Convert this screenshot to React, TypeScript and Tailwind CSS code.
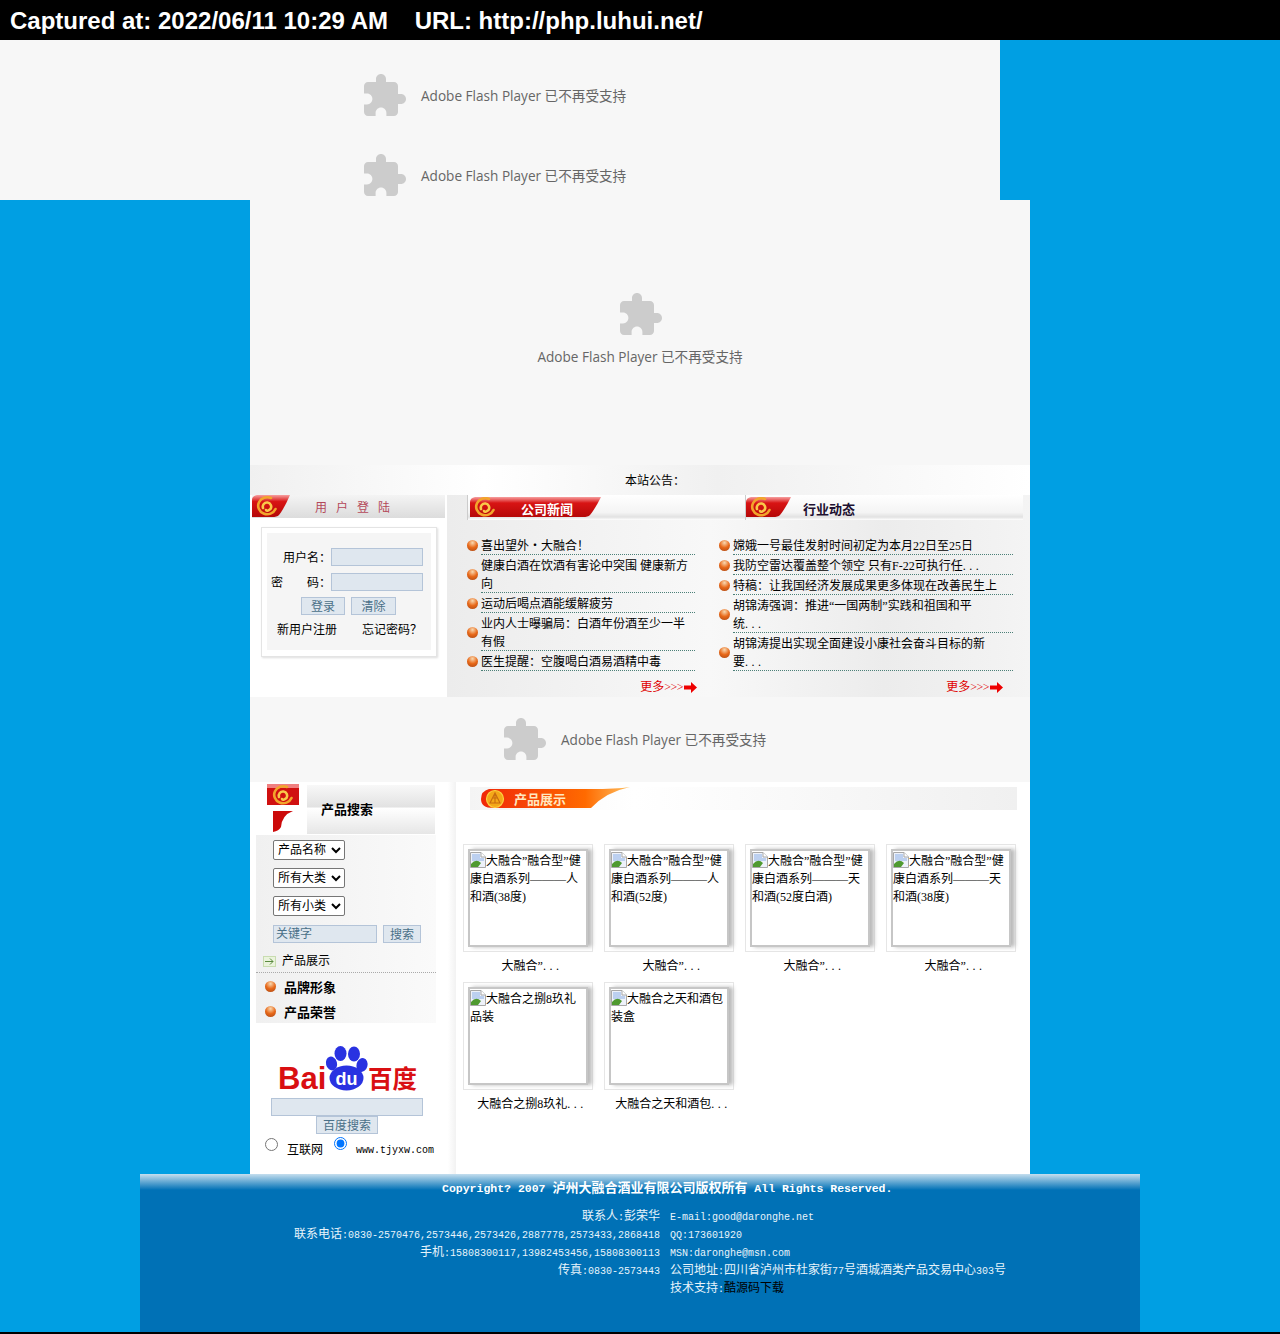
const cjk = "font-['Liberation_Serif','Noto_Sans_CJK_SC',serif]";
const mono = "font-['Liberation_Mono','Noto_Sans_CJK_SC',monospace]";

const leftNews = [
  ["喜出望外・大融合！"],
  ["健康白酒在饮酒有害论中突围 健康新方", "向"],
  ["运动后喝点酒能缓解疲劳"],
  ["业内人士曝骗局：白酒年份酒至少一半", "有假"],
  ["医生提醒：空腹喝白酒易酒精中毒"],
];

const rightNews = [
  ["嫦娥一号最佳发射时间初定为本月22日至25日"],
  ["我防空雷达覆盖整个领空 只有F-22可执行任..."],
  ["特稿：让我国经济发展成果更多体现在改善民生上"],
  ["胡锦涛强调：推进“一国两制”实践和祖国和平", "统..."],
  ["胡锦涛提出实现全面建设小康社会奋斗目标的新", "要..."],
];

const products = [
  { alt: ["大融合”融合型”健", "康白酒系列———人", "和酒(38度)"], name: "大融合”..." },
  { alt: ["大融合”融合型”健", "康白酒系列———人", "和酒(52度)"], name: "大融合”..." },
  { alt: ["大融合”融合型”健", "康白酒系列———天", "和酒(52度白酒)"], name: "大融合”..." },
  { alt: ["大融合”融合型”健", "康白酒系列———天", "和酒(38度)"], name: "大融合”..." },
  { alt: ["大融合之捌8玖礼", "品装"], name: "大融合之捌8玖礼..." },
  { alt: ["大融合之天和酒包", "装盒"], name: "大融合之天和酒包..." },
];

function Dots({ text }: { text: string }) {
  if (!text.endsWith("...")) return <>{text}</>;
  return (
    <>
      {text.slice(0, -3)}
      <span className="tracking-[3.5px]">...</span>
    </>
  );
}

function Puzzle() {
  return (
    <svg width="48" height="48" viewBox="0 0 24 24" fill="#cccccc" className="shrink-0">
      <path d="M20.5 11H19V7c0-1.1-.9-2-2-2h-4V3.5C13 2.12 11.88 1 10.5 1S8 2.12 8 3.5V5H4c-1.1 0-1.99.9-1.99 2v3.8H3.5c1.49 0 2.7 1.21 2.7 2.7s-1.21 2.7-2.7 2.7H2V20c0 1.1.9 2 2 2h3.8v-1.5c0-1.49 1.21-2.7 2.7-2.7 1.49 0 2.7 1.21 2.7 2.7V22H17c1.1 0 2-.9 2-2v-4h1.5c1.38 0 2.5-1.12 2.5-2.5S21.88 11 20.5 11z" />
    </svg>
  );
}

function FlashText() {
  return (
    <span className="text-[13.6px] text-[#666] font-['Open_Sans','Noto_Sans_CJK_SC',sans-serif] whitespace-nowrap">
      Adobe Flash Player 已不再受支持
    </span>
  );
}

function Swirl({ x, y }: { x: number; y: number }) {
  return (
    <g transform={`translate(${x} ${y})`} fill="none" stroke="#f2a52c" strokeWidth="2.6" strokeLinecap="round">
      <path d="M4 -8 A9 8.5 0 1 0 8.5 3" />
      <path d="M-4 2 A4.2 4.2 0 1 1 3.5 3 Q0 6 -1 4" stroke="#f9c84a" />
    </g>
  );
}

function RedTab({ w, h, label }: { w: number; h: number; label?: string }) {
  return (
    <svg width={w} height={h} className="shrink-0">
      <defs>
        <linearGradient id="redtab" x1="0" y1="0" x2="0" y2="1">
          <stop offset="0" stopColor="#f7a0a0" />
          <stop offset="0.3" stopColor="#d81414" />
          <stop offset="1" stopColor="#b50808" />
        </linearGradient>
      </defs>
      <path d={`M5 0 H${w} Q${w - 6} ${h - 8} ${w - 11} ${h - 2} Q${w - 13} ${h} ${w - 18} ${h} H0 V5 Q0 1 5 0Z`} fill="url(#redtab)" />
      <Swirl x={15} y={h / 2} />
      {label && (
        <text x="51" y={h - 3} fill="#fff" fontSize="13" fontWeight="700" fontFamily="'Noto Sans CJK SC', sans-serif">
          {label}
        </text>
      )}
    </svg>
  );
}

function Ball() {
  return (
    <span className="w-[11px] h-[11px] shrink-0 rounded-full bg-[radial-gradient(circle_at_50%_25%,#f8d8b0,#e86818_50%,#a84818)]" />
  );
}

function NewsList({ items, width, gap }: { items: string[][]; width: string; gap: string }) {
  return (
    <ul className="flex flex-col">
      {items.map((lines) => (
        <li key={lines[0]} className={`flex items-center ${gap}`}>
          <Ball />
          <span className={`${width} pt-px border-b border-dotted border-[#4c8078] leading-[18px] whitespace-nowrap`}>
            {lines.map((l) => (
              <span key={l} className="block translate-y-px"><Dots text={l} /></span>
            ))}
          </span>
        </li>
      ))}
    </ul>
  );
}

function More() {
  return (
    <span className="flex items-center text-[#e00000] whitespace-nowrap">
      更多<span className="tracking-[-0.5px]">&gt;&gt;&gt;</span>
      <svg width="13" height="11" viewBox="0 0 13 11" className="ml-px">
        <path d="M0 3.5H7V0L13 5.5 7 11V7.5H0Z" fill="#ee0000" />
      </svg>
    </span>
  );
}

function FormButton({ label, w }: { label: string; w: string }) {
  return (
    <button className={`${w} h-[18px] pt-px bg-[#dfe7ef] border border-[#b4c4d8] text-[#4a7088] leading-4`}>{label}</button>
  );
}

function BrokenImage() {
  return (
    <svg width="16" height="16" viewBox="0 0 16 16" className="inline-block align-[-3px]">
      <path d="M.5.5H11L15.5 5V15.5H.5Z" fill="#eef2fa" stroke="#a8a8a8" />
      <path d="M11 .5V5H15.5" fill="#fff" stroke="#a8a8a8" />
      <path d="M2 2H10V6H14V9H2Z" fill="#bcd0f0" />
      <path d="M1 15V12Q6 6 11 11L8 15Z" fill="#4f9a30" />
    </svg>
  );
}

function BaiduLogo() {
  return (
    <svg width="140" height="52" viewBox="0 0 140 52" className="ml-[28px]">
      <text x="0" y="43" fill="#d90f12" fontSize="31" fontWeight="700" fontFamily="'Liberation Sans', sans-serif">Bai</text>
      <g fill="#2932e1">
        <ellipse cx="62.5" cy="7.5" rx="6" ry="7.5" />
        <ellipse cx="76" cy="8" rx="6" ry="7.5" />
        <ellipse cx="53.5" cy="17.5" rx="5.5" ry="7" transform="rotate(-15 53.5 17.5)" />
        <ellipse cx="84" cy="19" rx="5.5" ry="7" transform="rotate(15 84 19)" />
        <ellipse cx="68.5" cy="32" rx="17" ry="12.5" />
      </g>
      <text x="68.5" y="39" textAnchor="middle" fill="#fff" fontSize="18" fontWeight="700" fontFamily="'Liberation Sans', sans-serif">du</text>
      <text x="90" y="42" fill="#d90f12" fontSize="24.5" fontWeight="700" fontFamily="'Noto Sans CJK SC', sans-serif">百度</text>
    </svg>
  );
}

function M({ children }: { children: string }) {
  return <span className={`${mono} text-[10px]`}>{children}</span>;
}

function Row({ left, right }: { left?: React.ReactNode; right: React.ReactNode }) {
  return (
    <div className="flex h-[18px] leading-[18px] whitespace-nowrap">
      <div className="w-[520px] text-right">{left}</div>
      <div className="ml-[10px]">{right}</div>
    </div>
  );
}

export default function App() {
  return (
    <div className={`bg-[#009fe3] min-h-[1334px] text-xs text-black ${cjk}`}>
      <div className="h-10 bg-black flex items-center pl-[10px] pt-px text-white font-bold text-[24px] font-['Liberation_Sans',sans-serif] whitespace-pre">
        {"Captured at: 2022/06/11 10:29 AM    URL: http://php.luhui.net/"}
      </div>

      <div className="w-[1000px] bg-[#f7f7f7]">
        <div className="h-20 flex items-center pt-8 pl-[360px] gap-[13px]">
          <Puzzle />
          <FlashText />
        </div>
        <div className="h-20 flex items-center pt-8 pl-[360px] gap-[13px]">
          <Puzzle />
          <FlashText />
        </div>
      </div>

      <div className="w-[780px] ml-[250px] bg-white">
        <div className="h-[265px] bg-[#f7f7f7] flex flex-col items-center pt-[91px]">
          <Puzzle />
          <div className="mt-[9px]"><FlashText /></div>
        </div>

        <div className="h-[30px] pt-px bg-[linear-gradient(to_right,#f0f0f0,#ffffff_30%,#f0f0f0_60%,#ffffff)] flex items-center pl-[375px]">
          本站公告：
        </div>

        <div className="flex h-[202px]">
          <div className="w-[197px] bg-white">
            <div className="h-[23px] flex ml-[2px] w-[193px] bg-[linear-gradient(#f4f4f4,#dcdcdc)]">
              <RedTab w={38} h={22} />
              <span className="ml-[25px] mt-[4px] text-[#b4485a] tracking-[9px] font-['Noto_Sans_CJK_SC',sans-serif]">用户登陆</span>
            </div>
            <div className="ml-[11px] mt-[9px] w-[176px] h-[130px] border border-[#e4e4e4] p-[5px] shadow-[1px_1px_2px_#ddd]">
              <div className="h-[117px] bg-[#f5f5f5] pt-[15px] px-[4px]">
                <div className="flex items-center h-[18px]">
                  <span className="w-[60px] pt-[2px] text-right">用户名：</span>
                  <input className="w-[92px] h-[18px] bg-[#dfe7ef] border border-[#b4c4d8]" />
                </div>
                <div className="flex items-center h-[18px] mt-[7px]">
                  <span className="w-[60px] pt-[2px] flex justify-between"><span>密</span><span>码：</span></span>
                  <input type="password" className="w-[92px] h-[18px] bg-[#dfe7ef] border border-[#b4c4d8]" />
                </div>
                <div className="flex gap-[6px] ml-[30px] mt-[6px]">
                  <FormButton label="登录" w="w-[44px]" />
                  <FormButton label="清除" w="w-[45px]" />
                </div>
                <div className="flex mt-[6px] ml-[6px] gap-[25px] leading-[18px]">
                  <span>新用户注册</span>
                  <span>忘记密码？</span>
                </div>
              </div>
            </div>
          </div>

          <div className="w-[583px] bg-[linear-gradient(to_right,#ececec,#f8f8f8_45%,#ececec_75%,#f4f4f4)]">
            <div className="flex h-[25px] ml-[20px]">
              <div className="w-[278px] flex items-start pt-[2px] pl-[2px] border-l border-[#ccc] bg-[linear-gradient(#ffffff,#f4f4f4_70%,#e2e2e2_88%,#ffffff)]">
                <RedTab w={131} h={20} label="公司新闻" />
              </div>
              <div className="w-[278px] flex items-start pt-[2px] border-l border-[#ccc] bg-[linear-gradient(#ffffff,#f4f4f4_70%,#e2e2e2_88%,#ffffff)]">
                <RedTab w={45} h={20} />
                <span className="ml-[12px] mt-[4px] font-bold text-[13px] leading-4 text-[#201030] font-['Noto_Sans_CJK_SC',sans-serif]">行业动态</span>
              </div>
            </div>
            <div className="flex ml-[20px] mt-[15px] gap-[24px] h-[135px]">
              <NewsList items={leftNews} width="w-[214px]" gap="gap-[3px]" />
              <NewsList items={rightNews} width="w-[280px]" gap="gap-[3px]" />
            </div>
            <div className="flex mt-[9px]">
              <div className="w-[250px] flex justify-end"><More /></div>
              <div className="w-[306px] flex justify-end"><More /></div>
            </div>
          </div>
        </div>

        <div className="h-[85px] bg-[#f7f7f7] flex items-center pl-[250px] gap-[13px]">
          <Puzzle />
          <span className="pt-[2px]"><FlashText /></span>
        </div>

        <div className="flex h-[392px]">
          <div className="w-[206px] bg-[linear-gradient(to_right,#ffffff_96%,#f2f2f2)]">
            <div className="h-[53px] flex ml-[17px] pt-[2px]">
              <div className="w-[32px] flex flex-col gap-[6px]">
                <svg width="32" height="21">
                  <rect width="32" height="21" fill="#d01010" />
                  <rect width="32" height="4" fill="#f08080" />
                  <Swirl x={16} y={11} />
                </svg>
                <svg width="20" height="21" className="ml-[6px]">
                  <path d="M6 0H20Q9 4 8 16Q6 20 0 21V0Z" fill="#cc0a0a" />
                </svg>
              </div>
              <div className="ml-[8px] w-[128px] h-[49px] mt-px pb-[2px] flex items-center pl-[14px] font-bold text-[13px] font-['Noto_Sans_CJK_SC',sans-serif] bg-[linear-gradient(#f8f8f8,#e2e2e2_45%,#ffffff_47%,#e6e6e6)]">
                产品搜索
              </div>
            </div>

            <div className="w-[180px] h-[188px] ml-[6px] bg-[linear-gradient(to_right,#f0f0f0,#fafafa)] pt-[5px]">
              <div className="flex flex-col gap-[8px] pl-[17px]">
                <select className="w-[72px] h-[20px] bg-white border border-[#767676] rounded-[2px]"><option>产品名称</option></select>
                <select className="w-[72px] h-[20px] bg-white border border-[#767676] rounded-[2px]"><option>所有大类</option></select>
                <select className="w-[72px] h-[20px] bg-white border border-[#767676] rounded-[2px]"><option>所有小类</option></select>
              </div>
              <div className="flex gap-[6px] pl-[17px] mt-[9px]">
                <input placeholder="关键字" className="w-[104px] h-[18px] px-[2px] pt-px bg-[#dfe7ef] border border-[#b4c4d8] placeholder:text-[#4a7088]" />
                <FormButton label="搜索" w="w-[38px]" />
              </div>
              <div className="flex items-center h-[26px] pt-[3px] mt-[4px] pl-[7px] border-b border-dotted border-[#aaa]">
                <span className="w-[13px] h-[11px] bg-[#eaf3dc] border border-[#c8dcb0] flex items-center justify-center">
                  <svg width="9" height="7" viewBox="0 0 9 7" fill="none" stroke="#5a8a40"><path d="M0 3.5H8M5 .5 8 3.5 5 6.5" /></svg>
                </span>
                <span className="ml-[6px]">产品展示</span>
              </div>
              <div className="flex items-center h-[25px] pl-[9px] gap-[8px] font-bold text-[13px] mt-px font-['Noto_Sans_CJK_SC',sans-serif]"><Ball />品牌形象</div>
              <div className="flex items-center h-[25px] pl-[9px] gap-[8px] font-bold text-[13px] font-['Noto_Sans_CJK_SC',sans-serif]"><Ball />产品荣誉</div>
            </div>

            <div className="mt-[23px]"><BaiduLogo /></div>
            <div className="flex flex-col items-start">
              <input className="ml-[21px] w-[152px] h-[18px] bg-[#dfe7ef] border border-[#b4c4d8]" />
              <div className="ml-[66px] h-[18px] flex"><FormButton label="百度搜索" w="w-[62px]" /></div>
              <div className="flex items-start ml-[15px] mt-[3px]">
                <input type="radio" name="engine" className="w-[13px] h-[13px] m-0 mt-px" />
                <span className="ml-[9px] mt-[4px] leading-[18px]">互联网</span>
                <input type="radio" name="engine" defaultChecked className="w-[13px] h-[13px] ml-[11px]" />
                <span className={`ml-[9px] mt-[5px] leading-[18px] text-[10px] ${mono}`}>www.tjyxw.com</span>
              </div>
            </div>
          </div>

          <div className="w-[574px] pl-[7px] pt-[5px]">
            <div className="ml-[7px] w-[547px] h-[23px] bg-[linear-gradient(to_right,#f4f4f4,#ffffff_30%,#f0f0f0)] pl-[11px]">
              <svg width="150" height="23">
                <defs>
                  <linearGradient id="orange" x1="0" y1="0" x2="1" y2="0">
                    <stop offset="0" stopColor="#f02808" />
                    <stop offset="0.7" stopColor="#ff6a00" />
                    <stop offset="1" stopColor="#ffc060" />
                  </linearGradient>
                </defs>
                <path d="M8 2H110Q135 2 149 0Q125 5 110 21H12Q0 21 0 12Q0 4 8 2Z" fill="url(#orange)" />
                <circle cx="14" cy="12" r="8.5" fill="#f4a818" stroke="#fbd040" strokeWidth="1.2" />
                <path d="M14 6 9 16H19ZM14 6V16M11.5 11H16.5" fill="none" stroke="#c86a10" strokeWidth="1.1" />
                <text x="33" y="17" fill="#ffe8c0" fontSize="13" fontWeight="700" fontFamily="'Noto Sans CJK SC', sans-serif">产品展示</text>
              </svg>
            </div>

            <div className="grid grid-cols-[130px_130px_130px_130px] gap-x-[11px] gap-y-[7px] mt-[34px]">
              {products.map((p, i) => (
                <div key={i}>
                  <div className="h-[108px] border border-[#e6e6e6] p-[4px]">
                    <div className="h-[98px] border-2 border-[#c6c6c6] pt-px leading-[18px] whitespace-nowrap bg-white shadow-[4px_0_4px_#bbbbbb]">
                      {p.alt.map((line, j) => (
                        <div key={j}>
                          {j === 0 && <BrokenImage />}
                          {line}
                        </div>
                      ))}
                    </div>
                  </div>
                  <div className="mt-[5px] pl-2 leading-[18px] text-center whitespace-nowrap"><Dots text={p.name} /></div>
                </div>
              ))}
            </div>
          </div>
        </div>
      </div>

      <div className="w-[1000px] ml-[140px] h-[158px] bg-[linear-gradient(#c4deee,#0071b6_16px)] text-[#e8f4fb]">
        <div className="h-[33px] pt-[4px] pl-[302px] text-white font-bold whitespace-nowrap leading-[18px]">
          <span className={`${mono} text-[11.5px]`}>Copyright? 2007 </span>
          <span className="text-[13px] font-['Noto_Sans_CJK_SC',sans-serif]">泸州大融合酒业有限公司版权所有</span>
          <span className={`${mono} text-[11.5px]`}> All Rights Reserved.</span>
        </div>
        <div>
          <Row left={<>联系人<M>:</M>彭荣华</>} right={<M>E-mail:good@daronghe.net</M>} />
          <Row left={<>联系电话<M>:0830-2570476,2573446,2573426,2887778,2573433,2868418</M></>} right={<M>QQ:173601920</M>} />
          <Row left={<>手机<M>:15808300117,13982453456,15808300113</M></>} right={<M>MSN:daronghe@msn.com</M>} />
          <Row left={<>传真<M>:0830-2573443</M></>} right={<>公司地址<M>:</M>四川省泸州市杜家街<M>77</M>号酒城酒类产品交易中心<M>303</M>号</>} />
          <Row right={<>技术支持<M>:</M><span className="text-black">酷源码下载</span></>} />
        </div>
      </div>
      <div className="h-[2px] bg-black" />
    </div>
  );
}
